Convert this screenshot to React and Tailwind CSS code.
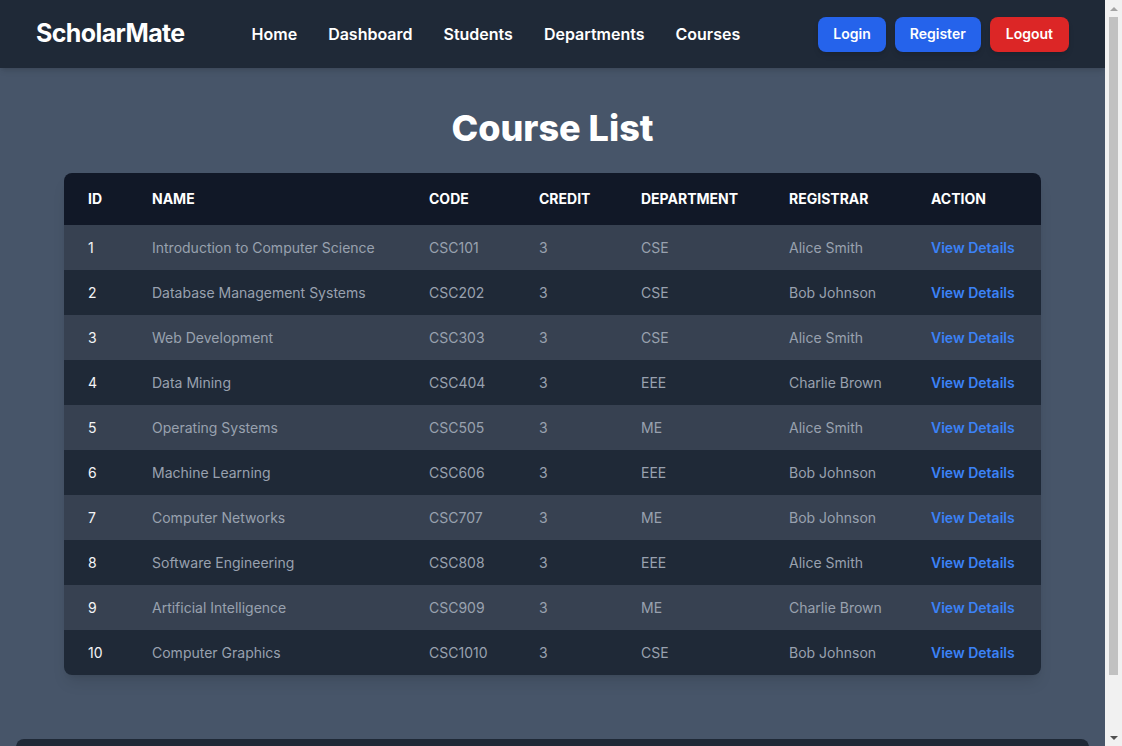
import React from "react";

const courses = [
  { id: 1, name: "Introduction to Computer Science", code: "CSC101", credit: 3, dept: "CSE", registrar: "Alice Smith" },
  { id: 2, name: "Database Management Systems", code: "CSC202", credit: 3, dept: "CSE", registrar: "Bob Johnson" },
  { id: 3, name: "Web Development", code: "CSC303", credit: 3, dept: "CSE", registrar: "Alice Smith" },
  { id: 4, name: "Data Mining", code: "CSC404", credit: 3, dept: "EEE", registrar: "Charlie Brown" },
  { id: 5, name: "Operating Systems", code: "CSC505", credit: 3, dept: "ME", registrar: "Alice Smith" },
  { id: 6, name: "Machine Learning", code: "CSC606", credit: 3, dept: "EEE", registrar: "Bob Johnson" },
  { id: 7, name: "Computer Networks", code: "CSC707", credit: 3, dept: "ME", registrar: "Bob Johnson" },
  { id: 8, name: "Software Engineering", code: "CSC808", credit: 3, dept: "EEE", registrar: "Alice Smith" },
  { id: 9, name: "Artificial Intelligence", code: "CSC909", credit: 3, dept: "ME", registrar: "Charlie Brown" },
  { id: 10, name: "Computer Graphics", code: "CSC1010", credit: 3, dept: "CSE", registrar: "Bob Johnson" },
];

function Navbar() {
  return (
    <nav className="bg-[#1f2937] h-[68px] px-9 flex items-center justify-between shadow-md relative z-10">
      <div className="flex items-center">
        <span className="text-[25px] font-bold text-white tracking-tight">ScholarMate</span>
        <ul className="flex items-center gap-[31px] ml-[67px]">
          {["Home", "Dashboard", "Students", "Departments", "Courses"].map((l) => (
            <li key={l} className="text-base font-semibold text-white">{l}</li>
          ))}
        </ul>
      </div>
      <div className="flex items-center gap-[9px]">
        <button className="bg-[#2563eb] text-white font-semibold text-sm h-[35px] px-[15px] rounded-lg shadow-md">Login</button>
        <button className="bg-[#2563eb] text-white font-semibold text-sm h-[35px] px-[15px] rounded-lg shadow-md">Register</button>
        <button className="bg-[#dc2626] text-white font-semibold text-sm h-[35px] px-4 rounded-lg shadow-md">Logout</button>
      </div>
    </nav>
  );
}

// fake classic scrollbar, as the reference was shot with one
function Scrollbar() {
  return (
    <div className="w-[17px] h-full bg-[#f1f1f1] flex flex-col items-center shrink-0">
      <div className="h-[17px] flex items-center justify-center">
        <div className="w-0 h-0 border-l-[4px] border-r-[4px] border-b-[4px] border-l-transparent border-r-transparent border-b-[#a3a3a3]" />
      </div>
      <div className="w-[9px] h-[658px] bg-[#c1c1c1]" />
      <div className="flex-1" />
      <div className="h-[17px] flex items-center justify-center">
        <div className="w-0 h-0 border-l-[4px] border-r-[4px] border-t-[4px] border-l-transparent border-r-transparent border-t-[#505050]" />
      </div>
    </div>
  );
}

export default function App() {
  const cols = ["ID", "NAME", "CODE", "CREDIT", "DEPARTMENT", "REGISTRAR", "ACTION"];
  const widths = ["w-[64px]", "w-[277px]", "w-[110px]", "w-[102px]", "w-[148px]", "w-[142px]", "w-[134px]"];

  return (
    <div className="h-screen flex overflow-hidden font-['Inter',sans-serif]">
      <div className="flex-1 h-full overflow-hidden bg-[#475569]">
        <Navbar />
        <main className="px-16 pt-10 pb-10">
          <h1 className="text-4xl font-extrabold text-white text-center mb-[25px]">Course List</h1>
          <div className="rounded-lg overflow-hidden shadow-lg">
            <table className="w-full table-fixed text-left">
              <thead className="bg-[#111827]">
                <tr>
                  {cols.map((c, i) => (
                    <th key={c} className={`${widths[i]} px-6 h-[52px] text-sm font-bold text-white`}>
                      {c}
                    </th>
                  ))}
                </tr>
              </thead>
              <tbody>
                {courses.map((c, i) => (
                  <tr key={c.id} className={`${i % 2 === 0 ? "bg-[#374151]" : "bg-[#1f2937]"} h-[45px] text-sm`}>
                    <td className="px-6 text-gray-100">{c.id}</td>
                    <td className="px-6 text-gray-400">{c.name}</td>
                    <td className="px-6 text-gray-400">{c.code}</td>
                    <td className="px-6 text-gray-400">{c.credit}</td>
                    <td className="px-6 text-gray-400">{c.dept}</td>
                    <td className="px-6 text-gray-400">{c.registrar}</td>
                    <td className="px-6 text-[#3b82f6] font-semibold">View Details</td>
                  </tr>
                ))}
              </tbody>
            </table>
          </div>
        </main>
        <footer className="mx-4 mt-6 h-[60px] bg-[#1f2937] rounded-lg" />
      </div>
      <Scrollbar />
    </div>
  );
}
